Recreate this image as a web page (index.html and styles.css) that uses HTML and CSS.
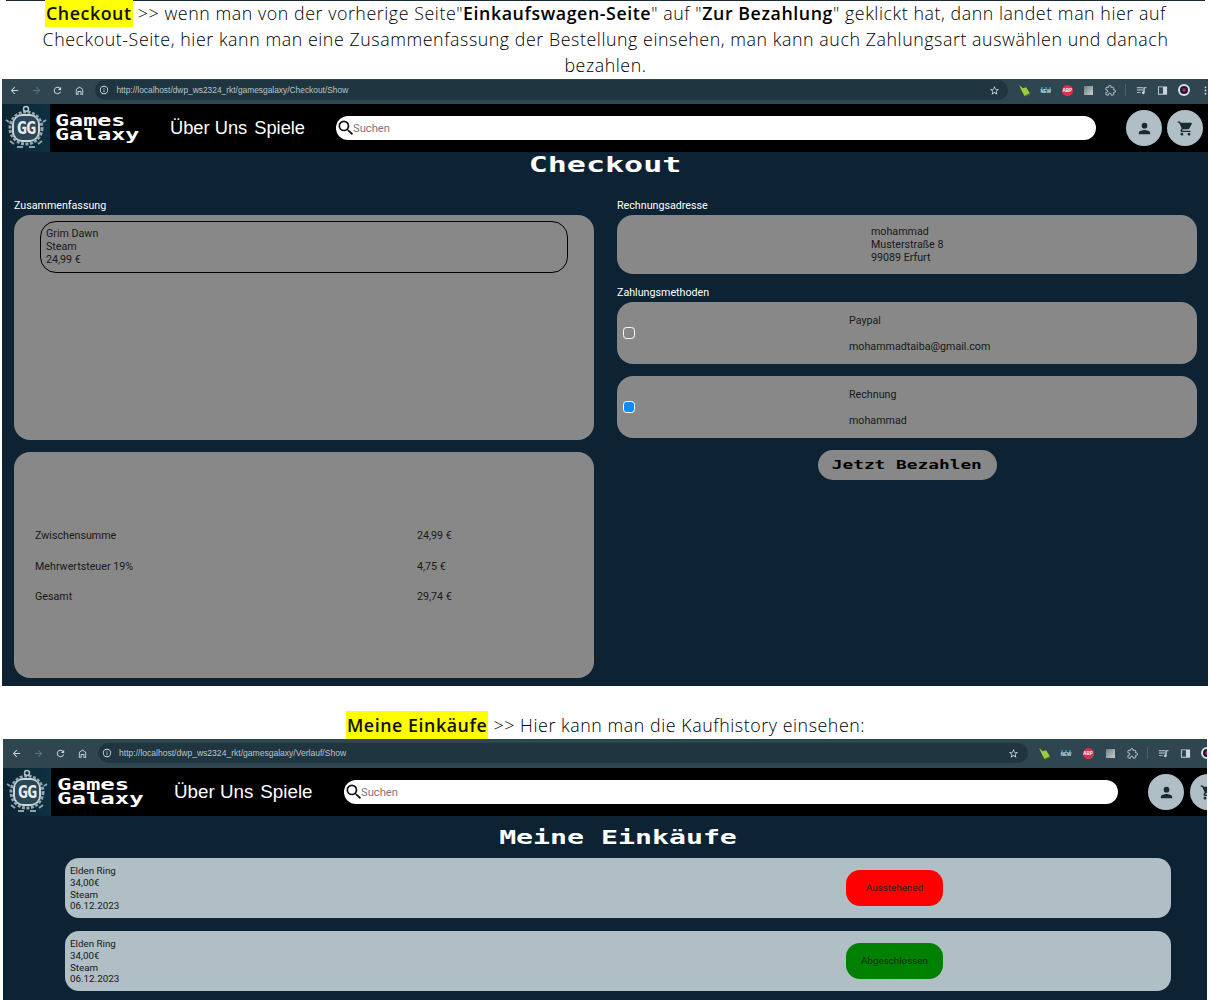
FILE: index.html
```html
<!DOCTYPE html>
<html lang="de">
<head>
    <meta charset="UTF-8">
    <title>Checkout und Meine Einkäufe</title>
    <link rel="stylesheet" href="styles.css">
</head>
<body>

    <!-- Icons used in both screenshots -->
    <svg class="icon-defs" xmlns="http://www.w3.org/2000/svg">
        <symbol id="i-back" viewBox="0 0 24 24"><path d="M20 11H7.800l5.600-5.600L12 4l-8 8 8 8 1.400-1.400L7.800 13H20z"/></symbol>
        <symbol id="i-forward" viewBox="0 0 24 24"><path d="M4 13h12.200l-5.600 5.600L12 20l8-8-8-8-1.400 1.400 5.600 5.600H4z"/></symbol>
        <symbol id="i-reload" viewBox="0 0 24 24"><path d="M17.600 6.400A8 8 0 1 0 19.700 14h-2.100a6 6 0 1 1-1.400-6.200L13 11h7V4z"/></symbol>
        <symbol id="i-home" viewBox="0 0 24 24"><path d="M12 3 4 9v12h6v-6h4v6h6V9zm6 16h-2v-6H8v6H6v-9l6-4.500 6 4.500z"/></symbol>
        <symbol id="i-info" viewBox="0 0 24 24"><path d="M12 2a10 10 0 1 0 0 20 10 10 0 0 0 0-20zm0 18a8 8 0 1 1 0-16 8 8 0 0 1 0 16zm-1-9h2v6h-2zm0-4h2v2h-2z"/></symbol>
        <symbol id="i-star" viewBox="0 0 24 24"><path d="m22 9.200-7.200-.6L12 2 9.200 8.600 2 9.200l5.500 4.700L5.800 21l6.200-3.700 6.200 3.700-1.700-7.100zm-10 6-3.800 2.300 1-4.300-3.300-2.900 4.400-.4L12 5.900l1.700 4 4.400.4-3.300 2.900 1 4.300z"/></symbol>
        <symbol id="i-broom" viewBox="0 0 24 24"><path fill="#9ccc3c" d="M2 2l7 6 6-2 7 11-10 5-5-9z"/><path fill="#4c7a1e" d="M12 22l10-5 1 2-9 4z"/></symbol>
        <symbol id="i-puzzle" viewBox="0 0 24 24"><path fill="none" stroke="currentColor" stroke-width="2" d="M20.500 11H19V7a2 2 0 0 0-2-2h-4V3.500a2.500 2.500 0 0 0-5 0V5H4a2 2 0 0 0-2 2v3.800h1.500a2.700 2.700 0 0 1 0 5.400H2V20a2 2 0 0 0 2 2h3.800v-1.500a2.700 2.700 0 0 1 5.400 0V22H17a2 2 0 0 0 2-2v-4h1.500a2.500 2.500 0 0 0 0-5z"/></symbol>
        <symbol id="i-queue" viewBox="0 0 24 24"><path d="M2 5h13v2H2zm0 5h13v2H2zm0 5h8v2H2zm14-10h7v2h-4v10a3 3 0 1 1-3-3z"/></symbol>
        <symbol id="i-panel" viewBox="0 0 24 24"><path d="M2 3h20v18H2zm2 2v14h9V5z" fill-rule="evenodd"/></symbol>
        <symbol id="i-dots" viewBox="0 0 24 24"><circle cx="12" cy="5" r="2"/><circle cx="12" cy="12" r="2"/><circle cx="12" cy="19" r="2"/></symbol>
        <symbol id="i-search" viewBox="0 0 24 24"><path d="M15.500 14h-.79l-.28-.27A6.470 6.470 0 0 0 16 9.500 6.500 6.500 0 1 0 9.500 16c1.610 0 3.090-.59 4.230-1.570l.27.28v.79l5 4.990L20.490 19l-4.990-5zm-6 0C7.010 14 5 11.990 5 9.500S7.010 5 9.500 5 14 7.010 14 9.500 11.990 14 9.500 14z"/></symbol>
        <symbol id="i-user" viewBox="0 0 24 24"><path d="M12 12a4 4 0 1 0 0-8 4 4 0 0 0 0 8zm0 2c-2.700 0-8 1.300-8 4v2h16v-2c0-2.700-5.300-4-8-4z"/></symbol>
        <symbol id="i-cart" viewBox="0 0 24 24"><path d="M7 18a2 2 0 1 0 0 4 2 2 0 0 0 0-4zM1 2v2h2l3.600 7.600-1.400 2.400c-.1.300-.2.600-.2 1 0 1.100.9 2 2 2h12v-2H7.400c-.1 0-.2-.1-.2-.2v-.1l.9-1.700h7.400c.8 0 1.400-.4 1.800-1l3.600-6.500c.1-.1.100-.3.100-.5 0-.5-.4-1-1-1H5.200l-.9-2zm16 16a2 2 0 1 0 0 4 2 2 0 0 0 0-4z"/></symbol>
        <symbol id="i-logo" viewBox="0 0 48 48">
            <rect x="11" y="11" width="26" height="26" rx="9" fill="#2b4654" stroke="#c9d5da" stroke-width="2"/>
            <circle cx="24" cy="24" r="16" fill="none" stroke="#93a6af" stroke-width="3" stroke-dasharray="3 1.500"/>
            <circle cx="24" cy="5" r="2.500" fill="none" stroke="#b5c3ca" stroke-width="1.500"/>
            <path d="M15 43h6M27 43h6M8 37l4 3M40 37l-4 3M4 16l3 2M44 16l-3 2" stroke="#8fa3ad" stroke-width="2" fill="none"/>
        </symbol>
    </svg>

    <p class="note note-first"><mark class="mark">Checkout</mark> &gt;&gt; wenn man von der vorherige Seite"<b>Einkaufswagen-Seite</b>" auf "<b>Zur Bezahlung</b>" geklickt hat, dann landet man hier auf<br>Checkout-Seite, hier kann man eine Zusammenfassung der Bestellung einsehen, man kann auch Zahlungsart auswählen und danach<br>bezahlen.</p>

    <section class="shot shot-checkout">
        <div class="toolbar">
            <span class="slot"><svg class="tool-icon"><use href="#i-back"/></svg></span>
            <span class="slot dim"><svg class="tool-icon"><use href="#i-forward"/></svg></span>
            <span class="slot"><svg class="tool-icon"><use href="#i-reload"/></svg></span>
            <span class="slot"><svg class="tool-icon"><use href="#i-home"/></svg></span>
            <div class="pill">
                <svg class="info-icon"><use href="#i-info"/></svg>
                <span class="url">http://localhost/dwp_ws2324_rkt/gamesgalaxy/Checkout/Show</span>
                <svg class="star-icon"><use href="#i-star"/></svg>
            </div>
            <span class="slot"><svg class="broom-icon"><use href="#i-broom"/></svg></span>
            <span class="slot"><span class="ext-new">NEW</span></span>
            <span class="slot"><span class="ext-abp">ABP</span></span>
            <span class="slot"><span class="ext-gray"></span></span>
            <span class="slot"><svg class="tool-icon"><use href="#i-puzzle"/></svg></span>
            <span class="sep"></span>
            <span class="slot"><svg class="tool-icon"><use href="#i-queue"/></svg></span>
            <span class="slot"><svg class="tool-icon"><use href="#i-panel"/></svg></span>
            <span class="slot"><span class="avatar"></span></span>
            <span class="slot"><svg class="tool-icon"><use href="#i-dots"/></svg></span>
        </div>
        <nav class="nav">
            <div class="logo"><svg class="logo-art"><use href="#i-logo"/></svg><span class="logo-text">GG</span></div>
            <a class="brand">Games<br>Galaxy</a>
            <div class="nav-links"><a>Über Uns</a><a>Spiele</a></div>
            <div class="search"><svg class="search-icon"><use href="#i-search"/></svg><span>Suchen</span></div>
            <span class="round round-user"><svg class="round-icon"><use href="#i-user"/></svg></span>
            <span class="round round-cart"><svg class="round-icon"><use href="#i-cart"/></svg></span>
        </nav>
        <main class="checkout">
            <h1 class="title">Checkout</h1>
            <div class="columns">
                <div class="col">
                    <h2 class="label">Zusammenfassung</h2>
                    <div class="card card-items">
                        <div class="item">Grim Dawn<br>Steam<br>24,99 €</div>
                    </div>
                    <div class="card card-totals">
                        <div class="totals">
                            <span>Zwischensumme</span><span>24,99 €</span>
                            <span>Mehrwertsteuer 19%</span><span>4,75 €</span>
                            <span>Gesamt</span><span>29,74 €</span>
                        </div>
                    </div>
                </div>
                <div class="col">
                    <h2 class="label">Rechnungsadresse</h2>
                    <div class="card card-address">mohammad<br>Musterstraße 8<br>99089 Erfurt</div>
                    <h2 class="label label-pay">Zahlungsmethoden</h2>
                    <div class="card card-pay">
                        <span class="radio"></span>
                        <div class="pay-text"><span>Paypal</span><span>mohammadtaiba@gmail.com</span></div>
                    </div>
                    <div class="card card-pay">
                        <span class="radio radio-on"></span>
                        <div class="pay-text"><span>Rechnung</span><span>mohammad</span></div>
                    </div>
                    <button class="pay-btn"><span class="pay-btn-text">Jetzt Bezahlen</span></button>
                </div>
            </div>
        </main>
    </section>

    <p class="note note-second"><mark class="mark">Meine Einkäufe</mark> &gt;&gt; Hier kann man die Kaufhistory einsehen:</p>

    <section class="shot shot-history">
        <div class="toolbar">
            <span class="slot"><svg class="tool-icon"><use href="#i-back"/></svg></span>
            <span class="slot dim"><svg class="tool-icon"><use href="#i-forward"/></svg></span>
            <span class="slot"><svg class="tool-icon"><use href="#i-reload"/></svg></span>
            <span class="slot"><svg class="tool-icon"><use href="#i-home"/></svg></span>
            <div class="pill">
                <svg class="info-icon"><use href="#i-info"/></svg>
                <span class="url">http://localhost/dwp_ws2324_rkt/gamesgalaxy/Verlauf/Show</span>
                <svg class="star-icon"><use href="#i-star"/></svg>
            </div>
            <span class="slot"><svg class="broom-icon"><use href="#i-broom"/></svg></span>
            <span class="slot"><span class="ext-new">NEW</span></span>
            <span class="slot"><span class="ext-abp">ABP</span></span>
            <span class="slot"><span class="ext-gray"></span></span>
            <span class="slot"><svg class="tool-icon"><use href="#i-puzzle"/></svg></span>
            <span class="sep"></span>
            <span class="slot"><svg class="tool-icon"><use href="#i-queue"/></svg></span>
            <span class="slot"><svg class="tool-icon"><use href="#i-panel"/></svg></span>
            <span class="slot"><span class="avatar"></span></span>
        </div>
        <nav class="nav">
            <div class="logo"><svg class="logo-art"><use href="#i-logo"/></svg><span class="logo-text">GG</span></div>
            <a class="brand">Games<br>Galaxy</a>
            <div class="nav-links"><a>Über Uns</a><a>Spiele</a></div>
            <div class="search"><svg class="search-icon"><use href="#i-search"/></svg><span>Suchen</span></div>
            <span class="round round-user"><svg class="round-icon"><use href="#i-user"/></svg></span>
            <span class="round round-cart"><svg class="round-icon"><use href="#i-cart"/></svg></span>
        </nav>
        <main class="history">
            <h1 class="title">Meine Einkäufe</h1>
            <div class="order">
                <div class="order-text">Elden Ring<br>34,00€<br>Steam<br>06.12.2023</div>
                <span class="status status-open">Ausstehened</span>
            </div>
            <div class="order">
                <div class="order-text">Elden Ring<br>34,00€<br>Steam<br>06.12.2023</div>
                <span class="status status-done">Abgeschlossen</span>
            </div>
        </main>
    </section>

</body>
</html>
```

FILE: styles.css
```css
/* General page */
body {
    margin: 0;
    background-color: #fff;
    color: #222;
    font-family: 'Open Sans', sans-serif;
    height: 1000px;
    overflow: hidden;
}

.icon-defs {
    display: block;
    width: 0;
    height: 0;
}

/* Document text between the screenshots */
.note {
    margin: 0;
    text-align: center;
    font-size: 17.800px;
    font-weight: 300;
    letter-spacing: 0.570px;
    line-height: 26px;
    white-space: nowrap;
    color: #000;
}

.note b {
    font-weight: 600;
}

.note-first {
    margin: 0 6px;
    border-top: 1px solid #1b2b36;
    height: 78px;
    line-height: 25.800px;
}

.note-second {
    margin-top: 26px;
    height: 27px;
}

.mark {
    background-color: #ffff00;
    color: #111;
    font-weight: 600;
    padding: 2px 1px;
}

/* Screenshot frames */
.shot {
    overflow: hidden;
    background-color: #0d2333;
}

.shot-checkout {
    margin-left: 2px;
    width: 1206px;
    height: 607px;
    --slot: 21.600px;
    --bar: 25px;
    --bar-pad: 3px;
    --pill: 913px;
    --star-pad: 8px;
    --search: 760px;
}

.shot-history {
    margin-left: 3px;
    width: 1204px;
    height: 261px;
    --slot: 22px;
    --bar: 29px;
    --bar-pad: 1px;
    --pill: 930px;
    --star-pad: 9px;
    --search: 774px;
}

/* Browser toolbar */
.toolbar {
    display: flex;
    align-items: center;
    box-sizing: border-box;
    height: var(--bar);
    padding: 0 0 var(--bar-pad) 2px;
    background-color: #2f4550;
    color: #c9d3d8;
    width: 1240px;
}

.slot {
    flex: none;
    width: var(--slot);
    display: flex;
    justify-content: center;
    align-items: center;
}

.slot.dim {
    color: #5f747e;
}

.tool-icon {
    width: 11px;
    height: 11px;
    fill: currentColor;
}

.broom-icon {
    width: 13px;
    height: 13px;
}

.pill {
    flex: none;
    display: flex;
    align-items: center;
    width: var(--pill);
    height: 20px;
    margin: 0 5px;
    box-sizing: border-box;
    padding: 0 var(--star-pad) 0 4px;
    background-color: #1f3540;
    border-radius: 10px;
}

.info-icon {
    width: 10px;
    height: 10px;
    fill: #d5dde1;
}

.star-icon {
    width: 11px;
    height: 11px;
    margin-left: auto;
    fill: #d5dde1;
}

.url {
    margin-left: 7px;
    font-family: 'Liberation Sans', sans-serif;
    font-size: 8.400px;
    color: #b9c6cc;
}

.shot-history .url {
    font-size: 8.550px;
}

.ext-new {
    font-family: 'Liberation Sans', sans-serif;
    font-size: 4.500px;
    font-weight: bold;
    line-height: 5px;
    color: #d8e2e6;
    border-top: 2px dotted #2a8aa3;
}

.ext-abp {
    width: 11px;
    height: 11px;
    border-radius: 50%;
    background-color: #d8324f;
    color: #fff;
    font-family: 'Liberation Sans', sans-serif;
    font-size: 4.500px;
    font-weight: bold;
    text-align: center;
    line-height: 11px;
}

.ext-gray {
    width: 9px;
    height: 9px;
    background: linear-gradient(135deg, #6f7e85, #c8ced1);
}

.sep {
    flex: none;
    width: 1px;
    height: 12px;
    margin: 0 4px;
    background-color: #4b616b;
}

.avatar {
    box-sizing: border-box;
    width: 12px;
    height: 12px;
    border-radius: 50%;
    border: 2px solid #d7e2ea;
    background: radial-gradient(circle, #c2185b 0 1.500px, #1b1b2e 2px);
}

/* Site navbar */
.nav {
    display: flex;
    align-items: center;
    height: 48px;
    background-color: #000;
    color: #fff;
    width: 1240px;
}

.logo {
    position: relative;
    flex: none;
    width: 48px;
    height: 48px;
    background: linear-gradient(90deg, #0c2433, #0d3040);
}

.logo-art {
    width: 48px;
    height: 48px;
}

.logo-text {
    position: absolute;
    left: 0;
    right: 0;
    top: 14px;
    text-align: center;
    font-family: 'DejaVu Sans Mono', monospace;
    font-weight: bold;
    font-size: 17px;
    line-height: 20px;
    letter-spacing: -1px;
    color: #e6edf0;
}

.brand {
    flex: none;
    margin-left: 5px;
    width: 100px;
    font-family: 'DejaVu Sans Mono', monospace;
    font-weight: bold;
    font-size: 16px;
    line-height: 14px;
    transform: scaleX(1.460);
    transform-origin: left center;
}

.shot-history .brand {
    margin-left: 6px;
    transform: scaleX(1.500);
}

.nav-links {
    flex: none;
    display: flex;
    gap: 7px;
    margin-left: 15px;
    width: 166px;
    font-family: 'Liberation Sans', sans-serif;
    font-size: 18.300px;
}

.shot-history .nav-links {
    margin-left: 17px;
    width: 170px;
    font-size: 18.800px;
}

.search {
    flex: none;
    display: flex;
    align-items: center;
    box-sizing: border-box;
    width: var(--search);
    height: 24px;
    background-color: #fff;
    border-radius: 12px;
    color: #777;
    font-family: Roboto, sans-serif;
    font-size: 11.200px;
}

.search-icon {
    width: 20px;
    height: 20px;
    margin-right: -3px;
    fill: #111;
}

.round {
    flex: none;
    display: flex;
    justify-content: center;
    align-items: center;
    width: 36px;
    height: 36px;
    border-radius: 50%;
    background-color: #b0bec5;
}

.round-user {
    margin-left: 30px;
}

.round-cart {
    margin-left: 5px;
}

.shot-history .round-cart {
    margin-left: 6px;
}

.round-icon {
    width: 17px;
    height: 17px;
    fill: #1a2a33;
}

/* Headings in the wide pixel look */
.title {
    margin: 0;
    text-align: center;
    color: #fff;
    font-family: 'DejaVu Sans Mono', monospace;
    font-weight: bold;
}

/* Checkout page */
.checkout {
    font-family: Roboto, sans-serif;
    font-size: 10.700px;
    line-height: 12.900px;
    color: #181818;
}

.checkout .title {
    height: 26px;
    font-size: 22px;
    line-height: 26px;
    transform: scaleX(1.440);
}

.columns {
    display: grid;
    grid-template-columns: 580px 580px;
    column-gap: 23px;
    padding: 20px 0 0 12px;
}

.label {
    margin: 0;
    height: 17px;
    font-size: 10.700px;
    font-weight: 400;
    line-height: 16px;
    color: #fff;
}

.label-pay {
    margin-top: 11px;
}

.card {
    background-color: #888;
    border-radius: 16px;
}

.card-items {
    height: 225px;
    box-sizing: border-box;
    padding: 6px 26px;
}

.item {
    box-sizing: border-box;
    height: 52px;
    padding: 6px 5px;
    border: 1px solid #000;
    border-radius: 16px;
}

.card-totals {
    display: flex;
    align-items: center;
    height: 226px;
    margin-top: 12px;
    padding: 4px 0 0 21px;
    box-sizing: border-box;
}

.totals {
    display: grid;
    grid-template-columns: 382px auto;
    row-gap: 18px;
    line-height: 12.500px;
}

.card-address {
    height: 59px;
    box-sizing: border-box;
    padding: 11px 0 0 254px;
}

.card-pay {
    display: flex;
    align-items: center;
    height: 62px;
    margin-bottom: 12px;
    padding-left: 6px;
}

.radio {
    box-sizing: border-box;
    width: 12px;
    height: 12px;
    border: 1px solid #fff;
    border-radius: 3.500px;
    background-color: #888;
}

.radio-on {
    background-color: #0d8bff;
}

.pay-text {
    display: flex;
    flex-direction: column;
    gap: 13px;
    margin: 3px 0 0 214px;
}

.pay-btn {
    display: block;
    width: 179px;
    height: 30px;
    margin: 0 auto;
    padding: 0 0 2px;
    border: none;
    border-radius: 15px;
    background-color: #888;
    color: #000;
    font-family: 'DejaVu Sans Mono', monospace;
    font-weight: bold;
    font-size: 13px;
}

.pay-btn-text {
    display: inline-block;
    transform: scaleX(1.370);
}

/* Order history page */
.history {
    width: 1230px;
    font-family: Roboto, sans-serif;
    color: #181818;
}

.history .title {
    box-sizing: border-box;
    padding-top: 8px;
    height: 42px;
    font-size: 20px;
    line-height: 26px;
    transform: scaleX(1.410);
}

.order {
    display: flex;
    align-items: center;
    box-sizing: border-box;
    height: 60px;
    margin: 0 0 13px 62px;
    width: 1106px;
    padding-left: 5px;
    background-color: #b0bec5;
    border-radius: 14px;
    font-size: 9.800px;
    line-height: 11.700px;
}

.order-text {
    width: 776px;
    padding-top: 1px;
}

.status {
    width: 97px;
    height: 36px;
    border-radius: 14px;
    font-size: 9.800px;
    line-height: 36px;
    text-align: center;
    color: #222;
}

.status-open {
    background-color: #ff0000;
}

.status-done {
    background-color: #008000;
}
```
